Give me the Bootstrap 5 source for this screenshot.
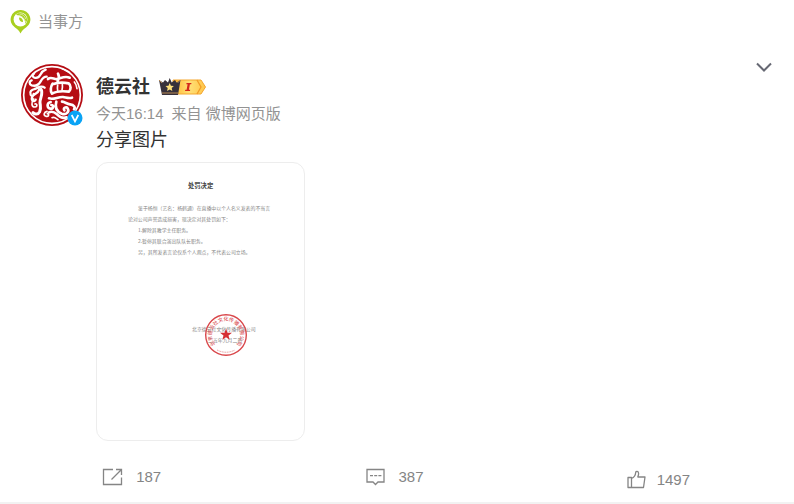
<!DOCTYPE html>
<html lang="zh-CN">
<head>
<meta charset="utf-8">
<meta name="viewport" content="width=device-width, initial-scale=1">
<title>德云社</title>
<link href="https://cdn.jsdelivr.net/npm/bootstrap@5.3.0/dist/css/bootstrap.min.css" rel="stylesheet">
<style>
body{font-family:"Liberation Sans","Noto Sans CJK SC",sans-serif;font-size:15px;color:#939393;background:#fff}
svg{display:block;flex:none}
a,button{color:inherit;text-decoration:none}
.feed{border-bottom:2px solid #f2f2f2}
.party{padding:9px 10px 0;gap:7px;line-height:24px}
.post{padding:26px 21px 0;gap:13px}
.avatar{width:62px;height:62px;margin-top:4px}
.verified{right:0;bottom:0}
.author{font-size:18px;line-height:24px;color:#333;font-weight:700}
.nameline{gap:8px;padding-top:15px}
.meta{line-height:24px;gap:8px;padding-top:3px}
.words{font-size:18px;line-height:24px;color:#333;padding-top:2px}
.photo{width:209px;border:1px solid #ededed;border-radius:12px;margin-top:10px;overflow:hidden}
.photo text{font-family:"Noto Sans CJK SC",sans-serif;font-size:4.9px;fill:#858585}
.actions{padding:24px 4px 10px 0;color:#858585}
.actions button{gap:13px;line-height:24px}
.actions .like{gap:11px;padding-top:3px}
</style>
<script src="https://cdn.jsdelivr.net/npm/bootstrap@5.3.0/dist/js/bootstrap.bundle.min.js"></script>
</head>
<body>
<main class="feed">
  <div class="party d-flex align-items-center">
    <svg width="21" height="25" viewBox="0 0 21 25"><path d="M10.500 1a9.500 9.500 0 0 0-5.500 17.500c2.500 1.500 4 3 5.500 6 1.500-3 3-4.500 5.500-6A9.500 9.500 0 0 0 10.500 1Z" fill="#a9cf20"/><circle cx="10.500" cy="10.500" r="6.900" fill="#fff"/><path d="M6.500 5c5-3 11 1 10.500 6.500l-1.500 3.500c0-5-4-9-9-9Z" fill="#a9cf20"/><path d="M7.500 6.500c4 0 7 2.500 8 6.500M9.500 5c3.500 0 5.500 2.500 6.300 5" fill="none" stroke="#e4f1b1" stroke-width=".8"/><path d="M9 8.500c2.500 0 4.200 2 4 4.500-2.500 0-4.200-2-4-4.500Z" fill="#a9cf20"/></svg>
    <span>当事方</span>
  </div>
  <article>
    <div class="post d-flex align-items-start">
      <a href="#" class="avatar position-relative flex-shrink-0" aria-label="德云社">
        <svg width="62" height="62" viewBox="27 25 186 186">
          <circle cx="120" cy="118" r="93" fill="#b50d14"/>
          <circle cx="120" cy="118" r="85" fill="none" stroke="#fff" stroke-width="5"/>
          <g fill="none" stroke="#fff" stroke-linecap="round" stroke-linejoin="round">
            <path stroke-width="7" d="M101 42c-8 3-12 8-15 14-4 8-12 12-19 10-6-2-7-10-1-12M104 63c-9 0-14 7-18 14-6 11-17 15-27 12-8-3-8-13 0-15M98 96c-12-9-21 2-30 4-10 3-16 8-12 17 3 6 10 3 9-2M82 101c-5 16-18 12-22 24-3 11 8 15 11 7"/>
            <path stroke-width="9" d="M87 101c8 14-4 26-3 40 1 11 4 16-1 27-5 9-14 9-20 3"/>
            <path stroke-width="5" d="M65 130c-8 10-7 25 4 24 8-1 7-11 0-9"/>
            <path stroke-width="8" d="M108 70c10-9 19 3 29 0 12-3 21-10 36-4M138 54c4 7 4 14-1 22M122 84c-6 8-8 23-2 30 12-7 34-8 51-6 6-6 7-19-1-25-15-3-31-3-45 2"/>
            <path stroke-width="5" d="M137 88c-1 6-1 11 0 16M151 86c1 6 0 11-1 17"/>
            <path stroke-width="8" d="M111 128c15 5 26-5 42-4 9 1 16 5 27 2M116 139c-13 3-11 19-1 20 10 1 11-11 3-11M133 138c-5 17 2 30 16 36 14 5 24-6 18-16-4-7-15-1-10 6M150 138c10 1 14 7 24 8 12 1 17 9 12 15M111 170c10-5 17 0 24 6 8 8 18 14 29 9"/>
            <path stroke-width="5" d="M105 167c-9 2-12 12-3 15 8 2 11-7 4-8M120 186c8-4 13 3 18 6M151 40c8 2 12 6 19 9M187 79c6 6 7 13 8 20"/>
          </g>
        </svg>
        <svg class="verified position-absolute" width="16" height="16" viewBox="0 0 16 16"><circle cx="8" cy="8" r="7.500" fill="#0aa3f5"/><path d="m4.700 5 3.300 6.300L11.300 5" fill="none" stroke="#fff" stroke-width="1.700"/></svg>
      </a>
      <div class="flex-grow-1">
        <div class="nameline d-flex align-items-center">
          <a href="#" class="author">德云社</a>
          <svg width="49" height="20" viewBox="0 0 49 20"><defs><linearGradient id="gold"><stop stop-color="#ffb52e"/><stop offset=".5" stop-color="#ffe077"/><stop offset="1" stop-color="#ffc447"/></linearGradient></defs>
            <path d="M15 3h28l4.500 7-4.500 7H15Z" fill="url(#gold)" stroke="#f4a62f"/><path d="m39 3 4 7-4 7" fill="none" stroke="#f29c27" stroke-width="1.300"/>
            <path d="M28.500 6h5l-.3 1.200h-1.300l-1 5.600h1.300L32 14h-5l.3-1.200h1.300l1-5.600h-1.300Z" fill="#d4281b"/>
            <path d="m1 3 4 2.500L7 3l3 2.500 1.700-4.500 2 4.500L17 3l1.500 2.500L22.500 3l-2.500 15H4Z" fill="#37313b"/><path d="M1 3l3 3M22.500 3l-3 3M4 16h16" stroke="#b98a54" stroke-width="1"/><path d="m11.700 6 1.200 2.800 3 .3-2.200 2 .6 3-2.600-1.500-2.600 1.500.6-3-2.200-2 3-.3Z" fill="#ffe17b"/></svg>
        </div>
        <div class="meta d-flex"><a href="#">今天16:14</a><span>来自 <a href="#">微博网页版</a></span></div>
        <div class="words">分享图片</div>
        <a href="#" class="photo d-block" aria-label="处罚决定">
          <svg class="w-100 h-auto" viewBox="0 0 207 277">
            <text x="91" y="25" style="font-size:6.300px;font-weight:700;fill:#444">处罚决定</text>
            <text x="41" y="47">鉴于杨恒（艺名：杨鹤通）在直播中以个人名义发表的不当言</text>
            <text x="31" y="58">论对公司声誉造成损害，现决定对其处罚如下：</text>
            <text x="41" y="69">1.解除其教学主任职务。</text>
            <text x="41" y="80">2.暂停其联合演出队队长职务。</text>
            <text x="41" y="91">另，其所发表言论仅系个人观点，不代表公司立场。</text>
            <text x="95" y="168">北京德云社文化传播有限公司</text>
            <text x="111" y="179">二五年九月二日</text>
            <circle cx="129" cy="172" r="20.300" fill="none" stroke="#d9474b" stroke-width="1.400"/>
            <path id="sealarc" d="M118.500 181.600a14.200 14.200 0 1 1 21 0" fill="none"/>
            <text style="font-size:5px;font-weight:500;fill:#dc5a5e"><textPath href="#sealarc">北京德云社文化传播有限公司</textPath></text>
            <path d="M120 187q9 4.500 18 0" fill="none" stroke="#e58c8e" stroke-width="1" stroke-dasharray="1 .7"/>
            <path d="m129 165.500 1.500 4.200 4.500.1-3.500 2.700 1.200 4.300-3.700-2.500-3.700 2.500 1.200-4.300-3.500-2.700 4.500-.1Z" fill="#d62f34"/>
          </svg>
        </a>
      </div>
      <button type="button" class="btn d-flex p-0 border-0" aria-label="更多"><svg width="18" height="16" viewBox="0 0 18 16"><path d="m2 3.500 7 7 7-7" fill="none" stroke="#666873" stroke-width="2"/></svg></button>
    </div>
    <div class="actions row g-0 align-items-start">
      <div class="col-4"><button type="button" class="d-flex align-items-center mx-auto border-0 bg-transparent p-0" aria-label="转发 187"><svg width="21" height="18" viewBox="0 0 21 18"><path d="M11 1.500H1.500v15h18v-7M9.500 11.500 19 2M14 1.500h5.500V7" fill="none" stroke="#858585" stroke-width="1.300"/></svg>187</button></div>
      <div class="col-4"><button type="button" class="d-flex align-items-center mx-auto border-0 bg-transparent p-0" aria-label="评论 387"><svg width="19" height="18" viewBox="0 0 19 18"><path d="M1 1.500h17v12.500h-6l-2.500 2.500L7 14H1Z" fill="none" stroke="#858585" stroke-width="1.300"/><path d="M4 7.700h3m1.200 0h3m1.200 0h3" stroke="#858585" stroke-width="1.300"/></svg>387</button></div>
      <div class="col-4"><button type="button" class="like d-flex align-items-center mx-auto border-0 bg-transparent px-0 pb-0" aria-label="赞 1497"><svg width="19" height="20" viewBox="0 0 19 20"><path d="M1 7.500h3.500v10H1ZM4.500 8.500C7 7.500 8.500 5 8.700 2.500 8.800 1 11.600.7 11.600 3.500c0 1.500-.5 2.500-.8 3.500H18l-1.500 10.500h-12" fill="none" stroke="#858585" stroke-width="1.300" stroke-linejoin="round"/></svg>1497</button></div>
    </div>
  </article>
</main>
</body>
</html>
